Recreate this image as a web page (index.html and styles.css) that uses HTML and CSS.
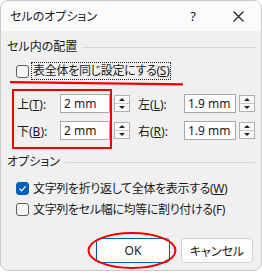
FILE: index.html
```html
<!DOCTYPE html>
<html lang="ja">
<head>
  <meta charset="UTF-8" />
  <meta name="viewport" content="width=device-width, initial-scale=1.0"/>
  <title>セルのオプション</title>
  <link rel="stylesheet" href="styles.css">
</head>
<body>
  <div class="dialog">
    <div class="titlebar">
      <span class="title">セルのオプション</span>
      <span class="tbBtn help">?</span>
      <span class="tbBtn close">
        <svg width="11" height="11" viewBox="0 0 11 11"><path d="M0.5 0.5L10.5 10.5M10.5 0.5L0.5 10.5" stroke="#1a1a1a" stroke-width="1.1" fill="none"/></svg>
      </span>
    </div>

    <div class="content">
      <div class="groupHead">セル内の配置</div>

      <div class="checkRow first">
        <span class="box"></span>
        <span class="focusLabel">表全体を同じ設定にする(<u>S</u>)</span>
      </div>

      <div class="spinRows">
        <div class="spinRow">
          <span class="fieldLabel">上(<u>T</u>):</span>
          <span class="field">2 mm</span>
          <span class="spinner"><span class="up"></span><span class="down"></span></span>
          <span class="fieldLabel right">左(<u>L</u>):</span>
          <span class="field wide">1.9 mm</span>
          <span class="spinner tight"><span class="up"></span><span class="down"></span></span>
        </div>
        <div class="spinRow">
          <span class="fieldLabel">下(<u>B</u>):</span>
          <span class="field">2 mm</span>
          <span class="spinner"><span class="up"></span><span class="down"></span></span>
          <span class="fieldLabel right">右(<u>R</u>):</span>
          <span class="field wide">1.9 mm</span>
          <span class="spinner tight"><span class="up"></span><span class="down"></span></span>
        </div>
      </div>

      <div class="groupHead opt">オプション</div>

      <div class="checkRow opt1">
        <span class="box checked">
          <svg width="11" height="11" viewBox="0 0 11 11"><path d="M2.5 5.8L4.6 7.8L8.6 3.4" stroke="#fff" stroke-width="1.2" fill="none"/></svg>
        </span>
        <span class="checkText">文字列を折り返して全体を表示する(<u>W</u>)</span>
      </div>
      <div class="checkRow opt2">
        <span class="box"></span>
        <span class="checkText">文字列をセル幅に均等に割り付ける(F)</span>
      </div>

      <div class="buttons">
        <span class="btn ok">OK</span>
        <span class="btn cancel">キャンセル</span>
      </div>
    </div>

    <!-- red annotations drawn over the dialog -->
    <svg class="marks" width="262" height="273" viewBox="0 0 262 273">
      <path d="M10 82.2L183 84.3" stroke="#ee0000" stroke-width="2.2" fill="none"/>
      <rect x="13" y="90" width="98" height="58" stroke="#ee0000" stroke-width="2" fill="none"/>
      <ellipse cx="132" cy="250.5" rx="43.5" ry="17.5" stroke="#ee0000" stroke-width="2" fill="none"/>
    </svg>
  </div>
</body>
</html>
```

FILE: styles.css
```css
body {
  margin: 0;
  background: #fff;
  font-family: "Noto Sans", "Noto Sans CJK JP", sans-serif;
  font-size: 12px;
  color: #1a1a1a;
  font-feature-settings: "palt";
}

.dialog {
  position: relative;
  width: 262px;
  height: 271px;
  box-sizing: border-box;
  border: 1px solid #c9c9c9;
  border-radius: 8px;
  background: #f0f0f0;
  overflow: hidden;
}

.titlebar {
  display: flex;
  align-items: center;
  height: 30px;
  background: #fbfbfb;
}

.title {
  padding-left: 9px;
}

.tbBtn {
  width: 46px;
  height: 30px;
  display: flex;
  align-items: center;
  justify-content: center;
}

.help {
  margin-left: auto;
  font-size: 13px;
}

.close {
  width: 45px;
}

.content {
  padding: 0 6px;
}

.groupHead {
  display: flex;
  align-items: center;
  gap: 5px;
  height: 14px;
  line-height: 14px;
  margin-top: 9px;
}

.groupHead::after {
  content: "";
  flex: 1;
  height: 1px;
  background: #d7d7d7;
}

.groupHead.opt {
  margin-top: 15px;
}

.checkRow {
  display: flex;
  align-items: center;
  height: 18px;
  padding-left: 9px;
}

.checkRow.first {
  margin-top: 8px;
}

.checkRow.opt1 {
  margin-top: 10px;
}

.checkRow.opt2 {
  margin-top: 3px;
}

.box {
  width: 13px;
  height: 13px;
  box-sizing: border-box;
  border: 1px solid #5d5d5d;
  border-radius: 3px;
  background: #f7f7f7;
  display: flex;
  align-items: center;
  justify-content: center;
}

.box.checked {
  background: #005fb8;
  border-color: #005fb8;
}

.focusLabel {
  margin-left: 2px;
  height: 18px;
  box-sizing: border-box;
  border: 1px dotted #222;
  padding: 0 1px;
  line-height: 16px;
  letter-spacing: -0.3px;
}

.checkText {
  margin-left: 4px;
  letter-spacing: -0.35px;
}

.spinRows {
  margin-top: 14px;
  padding-left: 10px;
  display: flex;
  flex-direction: column;
  gap: 8px;
}

.spinRow {
  display: flex;
  align-items: center;
  height: 19px;
}

.fieldLabel {
  width: 43px;
}

.fieldLabel.right {
  margin-left: 8px;
  width: 46px;
}

.field {
  width: 50px;
  height: 19px;
  box-sizing: border-box;
  border: 1px solid #a8a8a8;
  background: #fff;
  padding-left: 3px;
  line-height: 17px;
}

.field.wide {
  width: 52px;
}

.spinner {
  margin-left: 4px;
  width: 16px;
  height: 17px;
  box-sizing: border-box;
  border: 1px solid #b0b0b0;
  background: #fafafa;
  display: flex;
  flex-direction: column;
}

.spinner.tight {
  margin-left: 3px;
}

.spinner .up,
.spinner .down {
  flex: 1;
  display: flex;
  align-items: center;
  justify-content: center;
}

.spinner .up {
  border-bottom: 1px solid #c8c8c8;
}

.spinner .up::before {
  content: "";
  border-left: 3px solid transparent;
  border-right: 3px solid transparent;
  border-bottom: 3px solid #222;
}

.spinner .down::before {
  content: "";
  border-left: 3px solid transparent;
  border-right: 3px solid transparent;
  border-top: 3px solid #222;
}

.buttons {
  display: flex;
  justify-content: flex-end;
  gap: 11px;
  margin-top: 20px;
  padding-right: 2px;
}

.btn {
  height: 25px;
  box-sizing: border-box;
  border: 1px solid #d0d0d0;
  border-radius: 4px;
  background: #fdfdfd;
  display: flex;
  align-items: center;
  justify-content: center;
}

.btn.ok {
  width: 74px;
  border-color: #005fb8;
}

.btn.cancel {
  width: 72px;
}

.marks {
  position: absolute;
  left: -1px;
  top: -1px;
  pointer-events: none;
}
```
